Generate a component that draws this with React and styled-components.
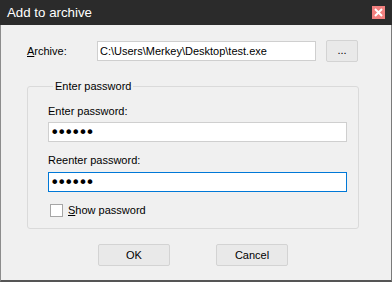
import React from "react";
import styled, { createGlobalStyle } from "styled-components";

const GlobalStyle = createGlobalStyle`
  html, body {
    margin: 0;
    padding: 0;
    background: #f0f0f0;
  }
  * {
    box-sizing: border-box;
  }
`;

const Window = styled.div`
  width: 392px;
  height: 282px;
  display: flex;
  flex-direction: column;
  font-family: "Liberation Sans", Arial, sans-serif;
  font-size: 11px;
  color: #000;
  background: #f0f0f0;
`;

const TitleBar = styled.div`
  height: 25px;
  flex: none;
  display: flex;
  align-items: center;
  justify-content: space-between;
  padding: 0 7px 0 7px;
  background: #2b2b2b;
  color: #fff;
  font-size: 13.3px;
`;

const CloseButton = styled.button`
  width: 13px;
  height: 13px;
  padding: 0;
  border: none;
  background: #f2807f;
  display: flex;
  align-items: center;
  justify-content: center;
  margin: -1px 0 0 0;
`;

const Body = styled.div`
  flex: 1;
  display: flex;
  flex-direction: column;
  padding: 15px 32px 0 26px;
  border-left: 1px solid #8c8c8c;
  border-right: 1px solid #7a7a7a;
  border-bottom: 2px solid #555;
`;

const ArchiveRow = styled.div`
  height: 22px;
  display: flex;
  align-items: center;
`;

const RowLabel = styled.label`
  width: 70px;
  flex: none;
  line-height: 14px;
`;

const TextBox = styled.input`
  display: block;
  width: ${(p) => p.$width}px;
  height: 20px;
  margin: 0;
  padding: 0 0 0 2px;
  border: 1px solid ${(p) => (p.$focused ? "#0078d7" : "#cfcfcf")};
  background: #fff;
  font-family: inherit;
  font-size: 11px;
  color: #000;
  outline: none;
`;

const PasswordBox = styled(TextBox)`
  font-family: "DejaVu Sans", sans-serif;
  font-size: 16px;
  letter-spacing: -2.4px;
  padding-left: 1px;
`;

const Button = styled.button`
  width: ${(p) => p.$width}px;
  height: 22px;
  padding: 0;
  margin: 0;
  border: 1px solid #d3d3d3;
  border-radius: 2px;
  background: #e9e9e9;
  font-family: inherit;
  font-size: 11px;
  color: #000;
`;

const BrowseButton = styled(Button)`
  margin-left: 10px;
  padding-bottom: 2px;
`;

const Group = styled.fieldset`
  margin: 17px 0 0 0;
  height: 150px;
  padding: 11px 10px 0 20px;
  border: 1px solid #dadada;
  border-radius: 3px;
  display: flex;
  flex-direction: column;
`;

const Legend = styled.legend`
  margin-left: 5px;
  padding: 0 2px;
  line-height: 14px;
  font-size: 11px;
`;

const FieldLabel = styled.label`
  display: block;
  line-height: 14px;
  margin-bottom: ${(p) => p.$gap}px;
`;

const Field = styled.div`
  margin-bottom: ${(p) => p.$after}px;
`;

const CheckRow = styled.label`
  display: flex;
  align-items: center;
  height: 14px;
  margin-left: 2px;
  gap: 5px;
`;

const CheckBox = styled.span`
  width: 13px;
  height: 13px;
  flex: none;
  border: 1px solid #a6a6a6;
  background: #fff;
`;

const ButtonRow = styled.div`
  margin-top: 15px;
  display: flex;
  justify-content: center;
  gap: 46px;
`;

const CloseIcon = () => (
  <svg width="9" height="9" viewBox="0 0 9 9">
    <path d="M1 1 L8 8 M8 1 L1 8" stroke="#fff" strokeWidth="2" />
  </svg>
);

export default function App() {
  return (
    <>
      <GlobalStyle />
      <Window>
        <TitleBar>
          <span>Add to archive</span>
          <CloseButton aria-label="Close">
            <CloseIcon />
          </CloseButton>
        </TitleBar>
        <Body>
          <ArchiveRow>
            <RowLabel>
              <u>A</u>rchive:
            </RowLabel>
            <TextBox $width={219} readOnly value="C:\Users\Merkey\Desktop\test.exe" />
            <BrowseButton $width={32}>...</BrowseButton>
          </ArchiveRow>
          <Group>
            <Legend>Enter password</Legend>
            <Field $after={11}>
              <FieldLabel $gap={4}>Enter password:</FieldLabel>
              <PasswordBox type="password" $width={299} readOnly value="secret" />
            </Field>
            <Field $after={11}>
              <FieldLabel $gap={5}>Reenter password:</FieldLabel>
              <PasswordBox type="password" $width={299} $focused readOnly value="secret" />
            </Field>
            <CheckRow>
              <CheckBox />
              <span>
                <u>S</u>how password
              </span>
            </CheckRow>
          </Group>
          <ButtonRow>
            <Button $width={72}>OK</Button>
            <Button $width={72}>Cancel</Button>
          </ButtonRow>
        </Body>
      </Window>
    </>
  );
}
